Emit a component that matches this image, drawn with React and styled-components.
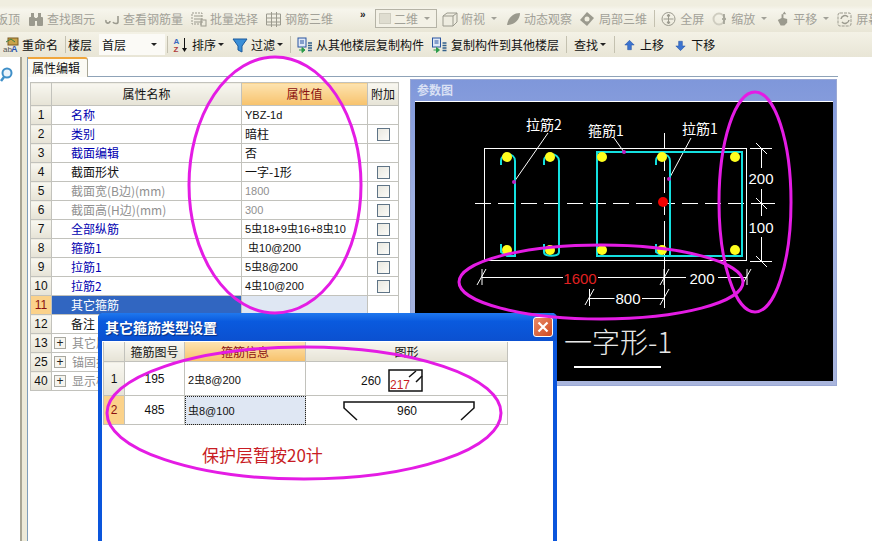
import React from 'react'
import styled, { createGlobalStyle } from 'styled-components'

const CJK = '"Noto Sans CJK SC", "Liberation Sans", sans-serif'
const HEAD_GRADIENT = 'linear-gradient(#f8f7f0, #e6e3d6)'
const ORANGE_GRADIENT = 'linear-gradient(#fde3b0, #f7c26c)'

const GlobalStyle = createGlobalStyle`
    html, body { margin: 0; padding: 0; background: #fff; }
    body { font-family: ${CJK}; font-size: 12px; color: #111; }
`

const Page = styled.div`
    position: relative;
    width: 872px;
    height: 541px;
    overflow: hidden;
    background: #fff;
`

const TopBar = styled.div`
    display: flex;
    align-items: center;
    height: 27px;
    padding-top: 5px;
    background: linear-gradient(#f0eee0 0%, #f0eee0 18%, #f6f5ec 30%, #e9e6d6 100%);
    color: #a2a198;
    white-space: nowrap;
`

const EditBar = styled.div`
    display: flex;
    align-items: center;
    height: 25px;
    background: linear-gradient(#f4f2e6, #e8e5d6);
    color: #111;
    white-space: nowrap;
`

const ToolItem = styled.div`
    display: flex;
    align-items: center;
    flex: none;
    gap: 3px;
    margin-left: ${p => p.$ml || 0}px;
    line-height: 16px;
`

const Caret = styled.span`
    flex: none;
    width: 0;
    height: 0;
    margin-left: ${p => p.$ml || 0}px;
    margin-right: 1px;
    border-left: 3px solid transparent;
    border-right: 3px solid transparent;
    border-top: 3px solid ${p => p.$muted ? '#a2a198' : '#222'};
`

const Sep = styled.span`
    flex: none;
    width: 1px;
    height: 17px;
    margin-left: ${p => p.$ml || 0}px;
    background: #c4c1b0;
`

const More = styled.span`
    flex: none;
    width: 8px;
    margin-left: ${p => p.$ml}px;
    margin-top: -8px;
    font: bold 10px "Liberation Sans", sans-serif;
    color: #222;
`

const ViewSelect = styled.div`
    display: flex;
    align-items: center;
    flex: none;
    box-sizing: border-box;
    width: 62px;
    height: 19px;
    margin-left: ${p => p.$ml}px;
    padding: 0 5px 0 3px;
    gap: 3px;
    border: 1px solid #b5b3a6;
    background: #f3f1e6;
`

const ViewSwatch = styled.span`
    width: 14px;
    height: 9px;
    background: #dfddd0;
    border: 1px solid #cfcdc0;
`

const FloorSelect = styled.div`
    display: flex;
    align-items: center;
    justify-content: space-between;
    flex: none;
    box-sizing: border-box;
    width: 66px;
    height: 21px;
    margin-left: ${p => p.$ml}px;
    padding: 0 7px 0 3px;
    background: #fbfaf6;
`

const TabRow = styled.div`
    display: flex;
    align-items: flex-end;
    height: 20px;
    padding-left: 24px;
    background: #fff;
    box-sizing: border-box;
    &::after {
        content: '';
        flex: none;
        width: 750px;
        height: 1px;
        background: #8fa3b8;
    }
`

const Tab = styled.div`
    box-sizing: border-box;
    width: 64px;
    height: 20px;
    padding: 1px 0 0 7px;
    line-height: 16px;
    background: #fbfaf4;
    border: 1px solid #a9a796;
    border-top: 2px solid #f0a63c;
    border-bottom: none;
    border-radius: 3px 3px 0 0;
`

const Workspace = styled.div`
    display: flex;
    align-items: flex-start;
    height: 464px;
`

const Gutter = styled.div`
    flex: none;
    width: 20px;
    height: 100%;
    margin-top: -10px;
`

const Splitter = styled.div`
    flex: none;
    width: 5px;
    height: 100%;
    margin-top: -20px;
    padding-bottom: 20px;
    margin-right: 2px;
    background: #ece9d8;
    border-left: 2px solid #a8a594;
    border-right: 1px solid #7f9db9;
`

const PropTable = styled.table`
    flex: none;
    width: 368px;
    margin: 5px 0 0 0;
    table-layout: fixed;
    border-collapse: collapse;
    background: #fff;
    td, th {
        height: 18px;
        padding: 0;
        border: 1px solid #c2c2bc;
        font-weight: normal;
        line-height: 16px;
        overflow: hidden;
        white-space: nowrap;
    }
`

const HeadCell = styled.th`
    background: ${p => p.$active ? ORANGE_GRADIENT : HEAD_GRADIENT};
    color: ${p => p.$active ? '#8a1010' : '#111'};
    text-align: center;
    && { height: 22px; }
`

const NumCell = styled.td`
    background: ${p => p.$active ? '#fbd28a' : HEAD_GRADIENT};
    color: ${p => p.$active ? '#8a1010' : '#111'};
    text-align: center;
    font-family: "Liberation Sans", sans-serif;
`

const NameCell = styled.td`
    padding-left: 19px !important;
    color: ${p => p.$tone === 'link' ? '#0000b0' : p.$tone === 'off' ? '#909090' : p.$tone === 'sel' ? '#fff' : '#111'};
    background: ${p => p.$tone === 'sel' ? '#3166c1' : '#fff'};
`

const ValueCell = styled.td`
    padding-left: 3px !important;
    font-family: ${p => p.$cjk ? CJK : '"Liberation Sans", sans-serif'};
    font-size: ${p => p.$cjk ? 12 : 11}px;
    color: ${p => p.$off ? '#909090' : '#111'};
    background: ${p => p.$sel ? '#dfe7f3' : '#fff'};
`

const ExtraCell = styled.td`
    text-align: center;
`

const Check = styled.span`
    display: block;
    box-sizing: border-box;
    width: 13px;
    height: 13px;
    margin: 1px auto 0;
    border: 1px solid #5f7486;
    background: linear-gradient(135deg, #e9e8e0, #fbfbf8);
`

const Rebar = styled.span`
    font-family: ${CJK};
    font-size: 11px;
    line-height: 14px;
`

const GroupCell = styled.td`
    color: #909090;
`

const GroupInner = styled.div`
    display: flex;
    align-items: center;
    padding-left: 2px;
    gap: 6px;
`

const Plus = styled.span`
    display: flex;
    align-items: center;
    justify-content: center;
    box-sizing: border-box;
    width: 12px;
    height: 12px;
    border: 1px solid #a8a8a0;
    background: #f6f5ef;
    color: #222;
    font: 12px/10px "Liberation Sans", sans-serif;
`

const ParamPanel = styled.div`
    flex: none;
    box-sizing: border-box;
    width: 427px;
    height: 307px;
    margin: 2px 0 0 11px;
    padding: 0 4px 5px 4px;
    background: linear-gradient(#7f97da, #9fb0e2 40%, #a9b5dc);
    border: 1px solid #9aa8d4;
`

const ParamTitle = styled.div`
    height: 21px;
    line-height: 20px;
    padding-left: 2px;
    color: #d9e0f4;
    font-weight: bold;
`

const ParamView = styled.svg`
    display: block;
    width: 418px;
    height: 279px;
    background: #000;
    border-top: 1px solid #fff;
`

const Dialog = styled.div`
    position: absolute;
    left: 98px;
    top: 313px;
    box-sizing: border-box;
    width: 459px;
    height: 240px;
    background: #fff;
    border: 4px solid #0a55dc;
    border-top: none;
    border-radius: 5px 5px 0 0;
`

const DialogTitle = styled.div`
    display: flex;
    align-items: center;
    justify-content: space-between;
    height: 28px;
    margin: 0 -4px;
    padding: 0 4px 0 7px;
    background: linear-gradient(#1f78ee 0%, #0a5ade 30%, #0b50d0 100%);
    border-radius: 5px 5px 0 0;
    color: #fff;
    font-size: 14px;
    font-weight: bold;
    text-shadow: 1px 1px 1px #0a2f80;
`

const CloseButton = styled.div`
    display: flex;
    align-items: center;
    justify-content: center;
    width: 20px;
    height: 20px;
    box-sizing: border-box;
    border: 1px solid #fff;
    border-radius: 3px;
    background: linear-gradient(135deg, #e88a68, #d04a20);
`

const DialogTable = styled.table`
    width: 404px;
    margin: 1px 0 0 1px;
    table-layout: fixed;
    border-collapse: collapse;
    td, th {
        padding: 0;
        border: 1px solid #c2c2bc;
        border-top: none;
        font-weight: normal;
        text-align: center;
        white-space: nowrap;
    }
`

const DialogHead = styled.th`
    height: 19px;
    background: ${p => p.$active ? ORANGE_GRADIENT : HEAD_GRADIENT};
    color: ${p => p.$active ? '#8a1010' : '#111'};
`

const DialogNum = styled.td`
    background: ${p => p.$active ? '#fbd28a' : HEAD_GRADIENT};
    color: ${p => p.$active ? '#8a1010' : '#111'};
    font-family: "Liberation Sans", sans-serif;
`

const DialogNo = styled.td`
    font: 12px "Liberation Sans", sans-serif;
`

const InfoCell = styled.td`
    && {
        text-align: left;
        padding-left: 3px;
        font: 11px "Liberation Sans", sans-serif;
        background: ${p => p.$sel ? '#dfe7f3' : '#fff'};
        outline: ${p => p.$sel ? '1px dotted #222' : 'none'};
        outline-offset: -1px;
    }
`

const ShapeSvg = styled.svg`
    display: block;
    width: 202px;
    font-family: "Liberation Sans", sans-serif;
    font-size: 12px;
`

const CoverNote = styled.div`
    margin: 18px 0 0 100px;
    color: #c81c24;
    font-size: 17px;
    line-height: 24px;
`

const Annotations = styled.svg`
    position: absolute;
    left: 0;
    top: 0;
    width: 872px;
    height: 541px;
    pointer-events: none;
`

// toolbar drawings
const ToolIcon = ({ w, children, muted }) => (
  <svg width={w} height="16" viewBox="0 0 16 16" style={{ flex: 'none', opacity: muted ? 0.55 : 1 }}>{children}</svg>
)

const grey = '#9b9a8e'
const icons = {
  binoculars: <g fill={grey}><rect x="1" y="6" width="6" height="9" rx="1" /><rect x="9" y="6" width="6" height="9" rx="1" /><rect x="3" y="2" width="3" height="5" /><rect x="10" y="2" width="3" height="5" /><rect x="6" y="7" width="4" height="3" /></g>,
  glasses: <g fill="none" stroke={grey} strokeWidth="1.6"><path d="M2 9c-1 4 4 4 4 1" /><path d="M14 5v6c0 2-4 2-5 0" /></g>,
  batch: <g fill="none" stroke={grey}><rect x="1" y="2" width="10" height="11" strokeDasharray="2 1" /><path d="M3 5h8M3 8h8M3 11h8" /><rect x="10" y="9" width="5" height="6" /></g>,
  grid3d: <g fill="none" stroke={grey}><path d="M1 3h14v11H1zM6 1v15M11 1v15M1 7h14M1 11h14" /></g>,
  cube: <g fill="#eeece0" stroke={grey}><path d="M1 5l4-3h10v9l-4 4H1z" /><path d="M1 5h10v10M11 5l4-3" fill="none" /></g>,
  orbit: <g fill={grey}><path d="M2 14C3 7 8 2 15 2c0 6-5 12-13 12z" /></g>,
  local3d: <g fill={grey}><path d="M8 1l7 6-7 8-7-6z" /><circle cx="8" cy="8" r="2.5" fill="#f0eee0" /></g>,
  fullscreen: <g fill="none" stroke={grey}><circle cx="8" cy="8" r="6.5" /><path d="M8 3v10M3 8h10" /><path d="M8 3l-1.5 2h3zM8 13l-1.5-2h3z" fill={grey} /></g>,
  zoom: <g fill="none" stroke={grey}><circle cx="7" cy="8" r="5.5" stroke="#cfcdc0" strokeWidth="2" /><path d="M12 3v4M12 9v4M10 8h4" strokeWidth="1.5" /></g>,
  hand: <g fill={grey}><path d="M3 9l4-2V3h2v4l4 1v4l-3 3H6z" /><path d="M10 0l2 3h-4z" /></g>,
  refresh: <g fill="none" stroke={grey}><rect x="1" y="2" width="13" height="13" rx="2" strokeDasharray="3 1" /><path d="M4 8a4 4 0 0 1 7-2M12 9a4 4 0 0 1-7 2" strokeWidth="1.5" /></g>,
  rename: <g><rect x="5" y="1" width="10" height="7" fill="#c9a24a" stroke="#7a5a20" /><path d="M3 5l5-3 4 3" fill="none" stroke="#3f7f3f" /><text x="0" y="15" fontSize="8" fontFamily="Liberation Sans" fill="#555">ab</text><text x="8" y="15" fontSize="9" fontWeight="bold" fontFamily="Liberation Sans" fill="#2a55b0">A</text></g>,
  sort: <g><text x="1" y="7" fontSize="8" fontWeight="bold" fontFamily="Liberation Sans" fill="#3a6ac0">A</text><text x="1" y="15" fontSize="8" fontWeight="bold" fontFamily="Liberation Sans" fill="#b03a3a">Z</text><path d="M12 1v12" stroke="#111" /><path d="M9.500 11l2.500 4 2.500-4z" fill="#111" /></g>,
  filter: <path d="M1 2h14l-5 7v6l-4-2V9z" fill="#3a8fd8" stroke="#1c5a9c" />,
  copy: <g><rect x="1" y="1" width="8" height="9" fill="#dfe8f6" stroke="#2a55a0" /><path d="M3 4h4M3 6h4" stroke="#2a55a0" /><path d="M2 13h5M5 10.500l3 2.500-3 2.500z" fill="#2c9c4a" stroke="#2c9c4a" /><path d="M11 6h4M11 8.500h4M11 11h4M11 13.500h4" stroke="#33608c" strokeWidth="1.300" /></g>,
  up: <path d="M8 3l5 5h-3v5H6V8H3z" fill="#3c74d0" stroke="#1c4a9c" strokeWidth="0.500" />,
  down: <path d="M8 14l5-5h-3V4H6v5H3z" fill="#3c74d0" stroke="#1c4a9c" strokeWidth="0.500" />,
}

const topItems = [
  { ml: 8, w: 16, icon: 'binoculars', label: '查找图元' },
  { ml: 9, w: 16, icon: 'glasses', label: '查看钢筋量' },
  { ml: 8, w: 16, icon: 'batch', label: '批量选择' },
  { ml: 7, w: 17, icon: 'grid3d', label: '钢筋三维' },
]
const viewItems = [
  { ml: 5, w: 16, icon: 'cube', label: '俯视', caret: true },
  { ml: 7, w: 16, icon: 'orbit', label: '动态观察' },
  { ml: 6, w: 18, icon: 'local3d', label: '局部三维' },
]
const zoomItems = [
  { ml: 5, w: 17, icon: 'fullscreen', label: '全屏' },
  { ml: 8, w: 16, icon: 'zoom', label: '缩放', caret: true },
  { ml: 7, w: 15, icon: 'hand', label: '平移', caret: true },
  { ml: 7, w: 16, icon: 'refresh', label: '屏幕' },
]

const Tool = ({ ml, w, icon, label, caret, muted }) => (
  <ToolItem $ml={ml}>
    <ToolIcon w={w}>{icons[icon]}</ToolIcon>
    <span>{label}</span>
    {caret && <Caret $ml={muted ? 3 : -1} $muted={muted} />}
  </ToolItem>
)

const R = () => <Rebar>虫</Rebar>

const rows = [
  { no: 1, name: '名称', tone: 'link', value: 'YBZ-1d' },
  { no: 2, name: '类别', tone: 'link', value: '暗柱', cjk: true, check: true },
  { no: 3, name: '截面编辑', tone: 'link', value: '否', cjk: true },
  { no: 4, name: '截面形状', value: '一字-1形', cjk: true, check: true },
  { no: 5, name: '截面宽(B边)(mm)', tone: 'off', value: '1800', off: true, check: true },
  { no: 6, name: '截面高(H边)(mm)', tone: 'off', value: '300', off: true, check: true },
  { no: 7, name: '全部纵筋', tone: 'link', value: <>5<R />18+9<R />16+8<R />10</>, check: true },
  { no: 8, name: '箍筋1', tone: 'link', value: <>&nbsp;<R />10@200</>, check: true },
  { no: 9, name: '拉筋1', tone: 'link', value: <>5<R />8@200</>, check: true },
  { no: 10, name: '拉筋2', tone: 'link', value: <>4<R />10@200</>, check: true },
]

const groups = [
  { no: 13, name: '其它属性' },
  { no: 25, name: '锚固搭接' },
  { no: 40, name: '显示样式' },
]

const Drawing = () => (
  <ParamView viewBox="415 102 418 279">
    <g fill="none" stroke="#fff" strokeWidth="1">
      <rect x="484.500" y="148.500" width="262" height="112" />
      <path d="M475 203.500h300" strokeDasharray="16 7" />
      <path d="M664.500 133v100" strokeDasharray="16 6" />
      <path d="M664.500 233v75" />
      <path d="M761.500 148v20M761.500 189v27M761.500 237v24M750 148.500h22M750 261.500h22M755 203.500h20" />
      <path d="M756 143l11 11M756 198l11 11M756 256l11 11" />
      <path d="M482 277.500h81M598 277.500h88M718 277.500h29M482 269v16M747 269v16M664 269v16" />
      <path d="M477 285l9-16M742 285l9-16M660 285l9-16" />
      <path d="M589.500 298.500h25M642 298.500h22M589.500 289v17M585 305l9-16M660 305l9-16" />
      <path d="M548 133l-34 49M614 138l10 14M691 138l-22 41" />
      <path d="M574 367h87" strokeWidth="2" />
    </g>
    <g fill="none" stroke="#14e0e0" strokeWidth="2">
      <rect x="597" y="152" width="145" height="104" />
      <path d="M501 165v-4c0-9 14-9 14 0v95h-8l-6-4v-8" />
      <path d="M544 165v-4c0-9 15-9 15 0v91c0 5-15 5-15 0v-8" />
      <path d="M656 165v-4c0-9 14-9 14 0v95h-8l-6-4v-8" />
    </g>
    <g fill="#ffff1e">
      {[507, 550, 602, 662, 735].map(x => (
        <React.Fragment key={x}>
          <circle cx={x} cy="157" r="5" />
          <circle cx={x} cy="250" r="5" />
        </React.Fragment>
      ))}
    </g>
    <circle cx="663" cy="202" r="5" fill="#f00000" />
    <g fill="#c020c0">
      <circle cx="514" cy="182" r="2" />
      <circle cx="624" cy="152" r="2" />
      <circle cx="669" cy="179" r="2" />
    </g>
    <g fill="#fff" fontFamily='"Noto Sans CJK SC", sans-serif' fontSize="14">
      <text x="526" y="130">拉筋2</text>
      <text x="588" y="136">箍筋1</text>
      <text x="682" y="134">拉筋1</text>
    </g>
    <g fill="#fff" fontFamily='"Liberation Sans", sans-serif' fontSize="15" textAnchor="middle">
      <text x="761" y="184">200</text>
      <text x="761" y="233">100</text>
      <text x="702" y="284">200</text>
      <text x="628" y="304">800</text>
      <text x="580" y="284" fill="#e02020">1600</text>
    </g>
    <text x="564" y="353" fill="#e8e8e8" fontFamily='"Noto Sans CJK SC", sans-serif' fontWeight="300" fontSize="28">一字形-1</text>
  </ParamView>
)

const App = () => (
  <Page>
    <GlobalStyle />
    <TopBar>
      <ToolItem $ml={-4}>板顶</ToolItem>
      {topItems.map(t => <Tool key={t.label} {...t} muted />)}
      <More $ml={27}>»</More>
      <ViewSelect $ml={7}><ViewSwatch />二维<Caret $ml={3} $muted /></ViewSelect>
      {viewItems.map(t => <Tool key={t.label} {...t} muted />)}
      <Sep $ml={7} />
      {zoomItems.map(t => <Tool key={t.label} {...t} muted />)}
    </TopBar>
    <EditBar>
      <Tool ml={3} w={16} icon="rename" label="重命名" />
      <Sep $ml={7} />
      <ToolItem $ml={2}>楼层</ToolItem>
      <FloorSelect $ml={7}>首层<Caret /></FloorSelect>
      <Sep $ml={2} />
      <Tool ml={4} w={17} icon="sort" label="排序" caret />
      <Tool ml={7} w={16} icon="filter" label="过滤" caret />
      <Sep $ml={6} />
      <Tool ml={6} w={16} icon="copy" label="从其他楼层复制构件" />
      <Tool ml={7} w={17} icon="copy" label="复制构件到其他楼层" />
      <Sep $ml={7} />
      <ToolItem $ml={7}>查找<Caret $ml={-1} /></ToolItem>
      <Sep $ml={7} />
      <Tool ml={7} w={15} icon="up" label="上移" />
      <Tool ml={9} w={15} icon="down" label="下移" />
    </EditBar>
    <TabRow>
      <Tab>属性编辑</Tab>
    </TabRow>
    <Workspace>
      <Gutter>
        <svg width="16" height="16" viewBox="0 0 16 16">
          <circle cx="7" cy="6" r="4.500" fill="#eaf3fb" stroke="#3f8fc8" strokeWidth="2" />
          <path d="M4 10l-3 4" stroke="#3f8fc8" strokeWidth="2.500" />
        </svg>
      </Gutter>
      <Splitter />
      <PropTable>
        <colgroup>
          <col style={{ width: 21 }} />
          <col style={{ width: 190 }} />
          <col style={{ width: 126 }} />
          <col style={{ width: 31 }} />
        </colgroup>
        <thead>
          <tr>
            <HeadCell />
            <HeadCell>属性名称</HeadCell>
            <HeadCell $active>属性值</HeadCell>
            <HeadCell>附加</HeadCell>
          </tr>
        </thead>
        <tbody>
          {rows.map(r => (
            <tr key={r.no}>
              <NumCell>{r.no}</NumCell>
              <NameCell $tone={r.tone}>{r.name}</NameCell>
              <ValueCell $cjk={r.cjk} $off={r.off}>{r.value}</ValueCell>
              <ExtraCell>{r.check && <Check />}</ExtraCell>
            </tr>
          ))}
          <tr>
            <NumCell $active>11</NumCell>
            <NameCell $tone="sel">其它箍筋</NameCell>
            <ValueCell $sel />
            <ExtraCell />
          </tr>
          <tr>
            <NumCell>12</NumCell>
            <NameCell>备注</NameCell>
            <ValueCell />
            <ExtraCell />
          </tr>
          {groups.map(g => (
            <tr key={g.no}>
              <NumCell>{g.no}</NumCell>
              <GroupCell colSpan={3}>
                <GroupInner><Plus>+</Plus>{g.name}</GroupInner>
              </GroupCell>
            </tr>
          ))}
        </tbody>
      </PropTable>
      <ParamPanel>
        <ParamTitle>参数图</ParamTitle>
        <Drawing />
      </ParamPanel>
    </Workspace>
    <Dialog>
      <DialogTitle>
        其它箍筋类型设置
        <CloseButton>
          <svg width="12" height="12" viewBox="0 0 12 12">
            <path d="M1.500 1.500l9 9M10.500 1.500l-9 9" stroke="#fff" strokeWidth="2.200" />
          </svg>
        </CloseButton>
      </DialogTitle>
      <DialogTable>
        <colgroup>
          <col style={{ width: 21 }} />
          <col style={{ width: 60 }} />
          <col style={{ width: 121 }} />
          <col style={{ width: 202 }} />
        </colgroup>
        <thead>
          <tr>
            <DialogHead />
            <DialogHead>箍筋图号</DialogHead>
            <DialogHead $active>箍筋信息</DialogHead>
            <DialogHead>图形</DialogHead>
          </tr>
        </thead>
        <tbody>
          <tr>
            <DialogNum>1</DialogNum>
            <DialogNo>195</DialogNo>
            <InfoCell>2<R />8@200</InfoCell>
            <td>
              <ShapeSvg height="33" viewBox="305 361 202 33">
                <text x="360" y="384" fill="#111">260</text>
                <rect x="388" y="369" width="33" height="21" fill="none" stroke="#111" strokeWidth="1.500" />
                <path d="M408 376l7-6M415 381l6-6" stroke="#111" strokeWidth="1.500" />
                <text x="389" y="388" fill="#c81c24">217</text>
              </ShapeSvg>
            </td>
          </tr>
          <tr>
            <DialogNum $active>2</DialogNum>
            <DialogNo>485</DialogNo>
            <InfoCell $sel><R />8@100</InfoCell>
            <td>
              <ShapeSvg height="28" viewBox="305 395 202 28">
                <path d="M356 419l-13-12v-6h130v6l-13 12" fill="none" stroke="#111" strokeWidth="1.500" />
                <text x="396" y="414" fill="#111">960</text>
              </ShapeSvg>
            </td>
          </tr>
        </tbody>
      </DialogTable>
      <CoverNote>保护层暂按20计</CoverNote>
    </Dialog>
    <Annotations viewBox="0 0 872 541">
      <g fill="none" stroke="#e41ce4" strokeWidth="3">
        <ellipse cx="275" cy="185" rx="86" ry="128" />
        <ellipse cx="755" cy="202" rx="36" ry="110" />
        <ellipse cx="601" cy="282" rx="142" ry="37" />
        <ellipse cx="304" cy="413" rx="197" ry="66" />
      </g>
    </Annotations>
  </Page>
)

export default App
